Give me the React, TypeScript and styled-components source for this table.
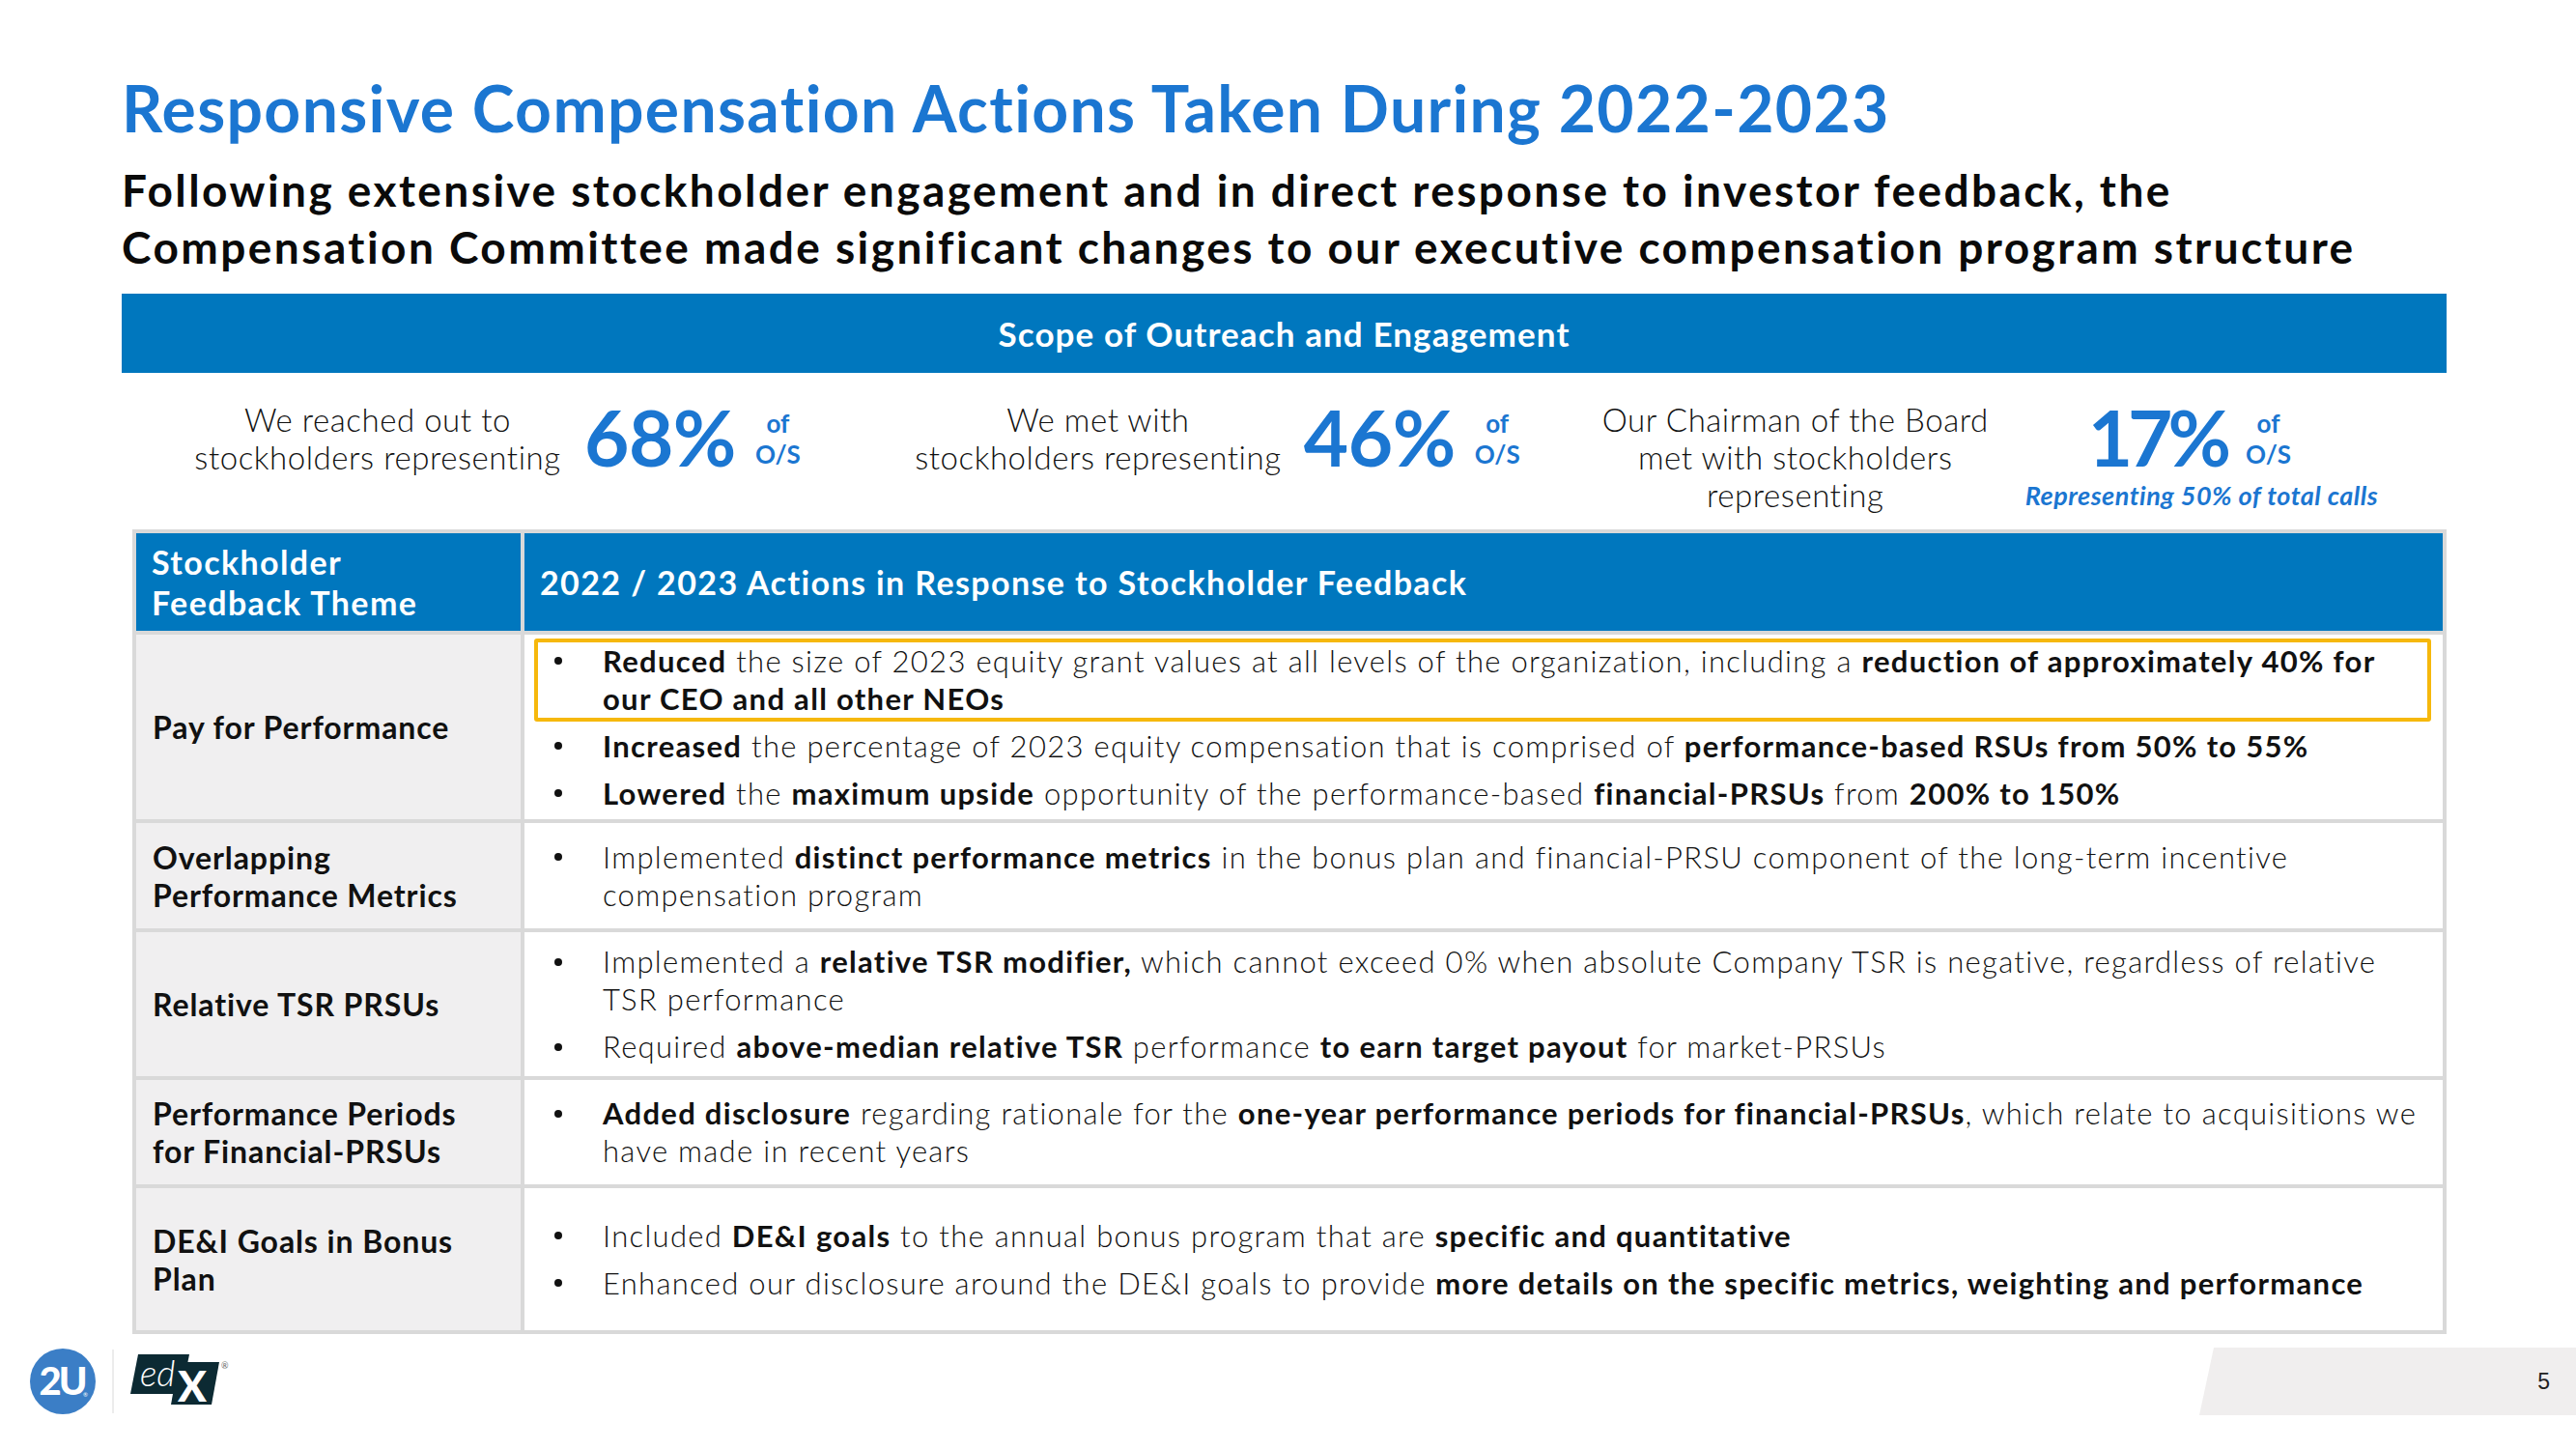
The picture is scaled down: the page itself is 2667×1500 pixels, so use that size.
import React from "react";
import styled, { createGlobalStyle } from "styled-components";

const TEXT_BLUE = "#1b76d1";
const BAR_BLUE = "#0077be";
const GRID_GRAY = "#d9d9d9";
const INK = "#111111";

const GlobalStyle = createGlobalStyle`
  html, body { margin: 0; padding: 0; background: #ffffff; }
  body { font-family: Lato, "Noto Sans", "Liberation Sans", sans-serif; color: ${INK}; }
  * { box-sizing: border-box; }
`;

const Slide = styled.div`
  width: 2667px;
  height: 1500px;
  display: flex;
  flex-direction: column;
  overflow: hidden;
  background: #ffffff;
`;

const Header = styled.header`
  padding: 75px 0 0 126px;
`;

const Title = styled.h1`
  margin: 0;
  font-size: 66px;
  line-height: 74px;
  font-weight: 700;
  color: ${TEXT_BLUE};
  letter-spacing: 1.35px;
`;

const Subtitle = styled.p`
  margin: 18px 0 0;
  font-size: 46px;
  line-height: 59px;
  font-weight: 700;
  letter-spacing: 2.45px;
  color: #0a0a0a;
`;

const Banner = styled.div`
  margin: 19px 134px 0 126px;
  height: 82px;
  background: ${BAR_BLUE};
  color: #ffffff;
  display: flex;
  align-items: center;
  justify-content: center;
  font-size: 35px;
  letter-spacing: 1.1px;
  font-weight: 700;
`;

const StatsRow = styled.section`
  height: 162px;
  display: flex;
  align-items: flex-start;
  padding: 29px 0 0 201px;
`;

const StatGroup = styled.div<{ $offset: number }>`
  display: flex;
  align-items: flex-start;
  margin-left: ${(p) => p.$offset}px;
`;

const StatLabel = styled.div<{ $w: number }>`
  width: ${(p) => p.$w}px;
  text-align: center;
  font-size: 33px;
  line-height: 39px;
  letter-spacing: 0.55px;
  font-weight: 300;
  color: ${INK};
`;

const Figure = styled.div<{ $gap: number }>`
  display: flex;
  flex-direction: column;
  align-items: flex-start;
  margin: -3px 0 0 ${(p) => p.$gap}px;
`;

const FigureRow = styled.div<{ $indent?: number }>`
  display: flex;
  align-items: flex-end;
  margin-left: ${(p) => p.$indent ?? 0}px;
`;

const BigNum = styled.span<{ $tight?: boolean }>`
  font-size: 80px;
  line-height: 80px;
  font-weight: 700;
  color: ${TEXT_BLUE};
  letter-spacing: ${(p) => (p.$tight ? "-5px" : "-0.5px")};
`;

const OfOS = styled.span`
  display: flex;
  flex-direction: column;
  align-items: center;
  margin: 0 0 6px 20px;
  font-size: 26px;
  line-height: 32px;
  font-weight: 700;
  color: ${TEXT_BLUE};
`;

const Caption = styled.span`
  margin-top: 6px;
  font-size: 27px;
  line-height: 30px;
  letter-spacing: 0.5px;
  font-weight: 700;
  font-style: italic;
  color: ${TEXT_BLUE};
  white-space: nowrap;
`;

const Table = styled.div<{ $rows: string }>`
  margin: 0 134px 0 137px;
  display: grid;
  grid-template-columns: 398px 1fr;
  grid-template-rows: ${(p) => p.$rows};
  gap: 4px;
  padding: 4px;
  background: ${GRID_GRAY};
`;

const HeadCell = styled.div`
  background: ${BAR_BLUE};
  color: #ffffff;
  font-size: 34px;
  line-height: 42px;
  letter-spacing: 1.4px;
  font-weight: 700;
  padding: 0 16px;
  display: flex;
  align-items: center;
`;

const ThemeCell = styled.div`
  background: #f0eff0;
  font-size: 32px;
  line-height: 39px;
  letter-spacing: 0.9px;
  font-weight: 700;
  padding: 0 17px;
  display: flex;
  align-items: center;
  color: ${INK};
`;

const ActionCell = styled.div`
  background: #ffffff;
  padding: 0 12px 0 10px;
  display: flex;
  flex-direction: column;
  justify-content: center;
  gap: 2px;
`;

const Bullet = styled.div<{ $highlight?: boolean }>`
  display: grid;
  grid-template-columns: 51px 1fr;
  padding-left: 16px;
  border: 4px solid ${(p) => (p.$highlight ? "#f6b80c" : "transparent")};
  border-radius: 3px;
  font-size: 31px;
  line-height: 39px;
  letter-spacing: 1.3px;
  font-weight: 300;
  white-space: nowrap;
  color: ${INK};
`;

const Dot = styled.span`
  height: 39px;
  display: flex;
  align-items: center;
  padding-left: 1px;

  &::before {
    content: "";
    width: 8px;
    height: 8px;
    border-radius: 50%;
    background: ${INK};
  }
`;

const B = styled.b`
  font-weight: 700;
`;

const Footer = styled.footer`
  margin-top: 14px;
  height: 70px;
  display: flex;
  align-items: center;
  justify-content: space-between;
`;

const Logos = styled.div`
  display: flex;
  align-items: center;
  padding-left: 31px;
`;

const Divider = styled.span`
  width: 2px;
  height: 66px;
  background: #ececec;
  margin: 0 12px 0 17px;
`;

const PageTab = styled.div`
  width: 390px;
  height: 70px;
  background: #f0eeee;
  clip-path: polygon(15px 0, 100% 0, 100% 100%, 0 100%);
  display: flex;
  align-items: center;
  justify-content: flex-end;
  padding-right: 27px;
  font-family: "Liberation Sans", Arial, sans-serif;
  font-size: 23px;
  color: #222222;
`;

type Item = { hl?: boolean; body: React.ReactNode };
type Row = { theme: React.ReactNode; h: number; items: Item[] };

const ROWS: Row[] = [
  {
    theme: "Pay for Performance",
    h: 191,
    items: [
      {
        hl: true,
        body: (
          <>
            <B>Reduced</B> the size of 2023 equity grant values at all levels of the organization, including a{" "}
            <B>reduction of approximately 40% for</B>
            <br />
            <B>our CEO and all other NEOs</B>
          </>
        ),
      },
      {
        body: (
          <>
            <B>Increased</B> the percentage of 2023 equity compensation that is comprised of{" "}
            <B>performance-based RSUs from 50% to 55%</B>
          </>
        ),
      },
      {
        body: (
          <>
            <B>Lowered</B> the <B>maximum upside</B> opportunity of the performance-based <B>financial-PRSUs</B> from{" "}
            <B>200% to 150%</B>
          </>
        ),
      },
    ],
  },
  {
    theme: (
      <>
        Overlapping
        <br />
        Performance Metrics
      </>
    ),
    h: 109,
    items: [
      {
        body: (
          <>
            Implemented <B>distinct performance metrics</B> in the bonus plan and financial-PRSU component of the long-term
            incentive
            <br />
            compensation program
          </>
        ),
      },
    ],
  },
  {
    theme: "Relative TSR PRSUs",
    h: 149,
    items: [
      {
        body: (
          <>
            Implemented a <B>relative TSR modifier,</B> which cannot exceed 0% when absolute Company TSR is negative,
            regardless of relative
            <br />
            TSR performance
          </>
        ),
      },
      {
        body: (
          <>
            Required <B>above-median relative TSR</B> performance <B>to earn target payout</B> for market-PRSUs
          </>
        ),
      },
    ],
  },
  {
    theme: (
      <>
        Performance Periods
        <br />
        for Financial-PRSUs
      </>
    ),
    h: 108,
    items: [
      {
        body: (
          <>
            <B>Added disclosure</B> regarding rationale for the <B>one-year performance periods for financial-PRSUs</B>,
            which relate to acquisitions we
            <br />
            have made in recent years
          </>
        ),
      },
    ],
  },
  {
    theme: (
      <>
        DE&amp;I Goals in Bonus
        <br />
        Plan
      </>
    ),
    h: 147,
    items: [
      {
        body: (
          <>
            Included <B>DE&amp;I goals</B> to the annual bonus program that are <B>specific and quantitative</B>
          </>
        ),
      },
      {
        body: (
          <>
            Enhanced our disclosure around the DE&amp;I goals to provide{" "}
            <B>more details on the specific metrics, weighting and performance</B>
          </>
        ),
      },
    ],
  },
];

const TwoULogo = () => (
  <svg width="68" height="68" viewBox="0 0 68 68">
    <circle cx="34" cy="34" r="34" fill="#3b7ec6" />
    <text
      x="33"
      y="48"
      textAnchor="middle"
      fill="#ffffff"
      fontFamily="Lato, sans-serif"
      fontWeight={900}
      fontSize="40"
      letterSpacing="-3"
    >
      2U
    </text>
    <text x="55" y="50" fill="#ffffff" fontFamily="Lato, sans-serif" fontSize="6">
      ®
    </text>
  </svg>
);

const EdxLogo = () => (
  <svg width="110" height="68" viewBox="0 -4 110 68">
    <polygon points="13,2 66,2 58,43 5,43" fill="#0c2a33" />
    <polygon points="55,10 97,10 89,54 47,54" fill="#0c2a33" />
    <text x="15" y="35" fill="#ffffff" fontFamily="Lato, sans-serif" fontStyle="italic" fontWeight={300} fontSize="37">
      ed
    </text>
    <text x="54" y="51" fill="#ffffff" fontFamily="Lato, sans-serif" fontWeight={900} fontSize="44">
      X
    </text>
    <text x="99" y="17" fill="#666666" fontFamily="Lato, sans-serif" fontSize="9">
      ®
    </text>
  </svg>
);

export default function App() {
  const rowTemplate = ["101px", ...ROWS.map((r) => `${r.h}px`)].join(" ");
  return (
    <>
      <GlobalStyle />
      <Slide>
        <Header>
          <Title>Responsive Compensation Actions Taken During 2022-2023</Title>
          <Subtitle>
            Following extensive stockholder engagement and in direct response to investor feedback, the
            <br />
            Compensation Committee made significant changes to our executive compensation program structure
          </Subtitle>
        </Header>

        <Banner>Scope of Outreach and Engagement</Banner>

        <StatsRow>
          <StatGroup $offset={0}>
            <StatLabel $w={380}>
              We reached out to
              <br />
              stockholders representing
            </StatLabel>
            <Figure $gap={24}>
              <FigureRow>
                <BigNum>68%</BigNum>
                <OfOS>
                  <span>of</span>
                  <span>O/S</span>
                </OfOS>
              </FigureRow>
            </Figure>
          </StatGroup>
          <StatGroup $offset={118}>
            <StatLabel $w={380}>
              We met with
              <br />
              stockholders representing
            </StatLabel>
            <Figure $gap={23}>
              <FigureRow>
                <BigNum>46%</BigNum>
                <OfOS>
                  <span>of</span>
                  <span>O/S</span>
                </OfOS>
              </FigureRow>
            </Figure>
          </StatGroup>
          <StatGroup $offset={85}>
            <StatLabel $w={400}>
              Our Chairman of the Board
              <br />
              met with stockholders
              <br />
              representing
            </StatLabel>
            <Figure $gap={38}>
              <FigureRow $indent={65}>
                <BigNum $tight>17%</BigNum>
                <OfOS>
                  <span>of</span>
                  <span>O/S</span>
                </OfOS>
              </FigureRow>
              <Caption>Representing 50% of total calls</Caption>
            </Figure>
          </StatGroup>
        </StatsRow>

        <Table $rows={rowTemplate}>
          <HeadCell>
            Stockholder
            <br />
            Feedback Theme
          </HeadCell>
          <HeadCell>2022 / 2023 Actions in Response to Stockholder Feedback</HeadCell>
          {ROWS.map((row, i) => (
            <React.Fragment key={i}>
              <ThemeCell>
                <span>{row.theme}</span>
              </ThemeCell>
              <ActionCell>
                {row.items.map((it, j) => (
                  <Bullet key={j} $highlight={it.hl}>
                    <Dot />
                    <span>{it.body}</span>
                  </Bullet>
                ))}
              </ActionCell>
            </React.Fragment>
          ))}
        </Table>

        <Footer>
          <Logos>
            <TwoULogo />
            <Divider />
            <EdxLogo />
          </Logos>
          <PageTab>5</PageTab>
        </Footer>
      </Slide>
    </>
  );
}
